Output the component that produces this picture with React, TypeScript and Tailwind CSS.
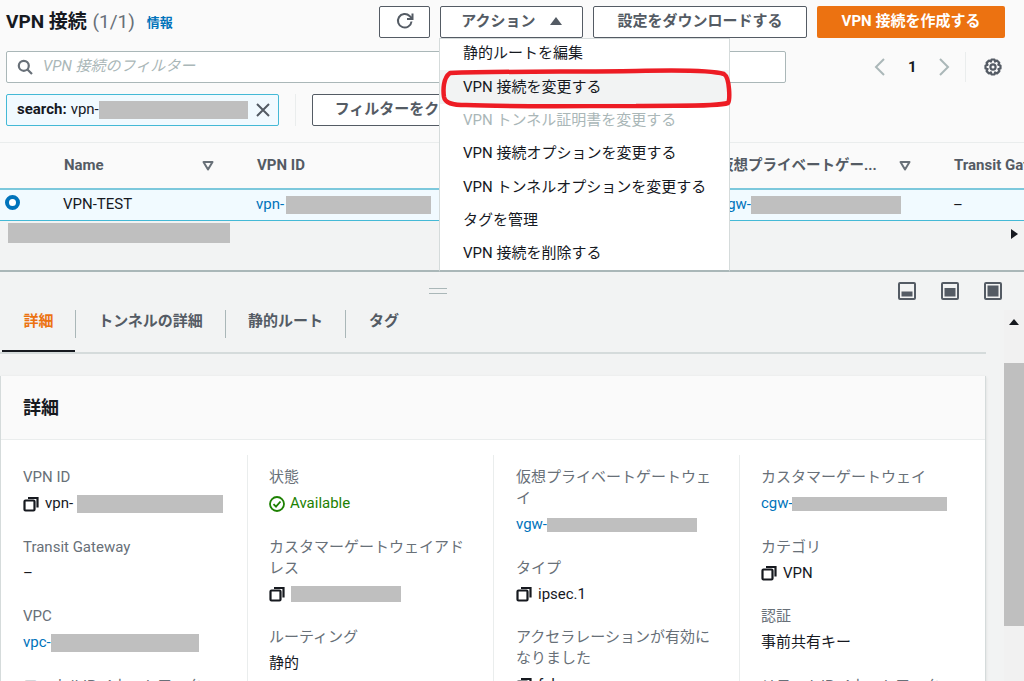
import React from "react";

const font = { fontFamily: 'Roboto, "Noto Sans CJK JP", sans-serif' };

function Bar({ w, h = 18, className = "" }: { w: number; h?: number; className?: string }) {
  return <span className={"inline-block bg-[#bfbfbf] align-middle " + className} style={{ width: w, height: h }} />;
}

function Copy() {
  return (
    <svg width="16" height="16" viewBox="0 0 16 16" fill="none" stroke="#16191f" strokeWidth="2.2" className="shrink-0">
      <rect x="1.5" y="4.5" width="10" height="10" rx="1" />
      <path d="M5 2H14.5V11.5" />
    </svg>
  );
}

function Sort() {
  return (
    <svg width="14" height="12" viewBox="0 0 14 12" fill="none" stroke="#687078" strokeWidth="2">
      <path d="M2.5 2H11.5L7 9.5Z" strokeLinejoin="round" />
    </svg>
  );
}

function Btn({ className, children }: { className: string; children: React.ReactNode }) {
  return (
    <div
      className={
        "h-[32px] flex items-center justify-center rounded-[2px] border border-[#545b64] bg-white text-[#545b64] text-[15px] font-bold pb-[2px] " +
        className
      }
    >
      {children}
    </div>
  );
}

function Field({ label, children, last }: { label: React.ReactNode; children?: React.ReactNode; last?: boolean }) {
  return (
    <div className={last ? "" : "mb-[22px]"}>
      <div className="text-[15px] leading-[21px] text-[#687078]">{label}</div>
      <div className="mt-[4.5px] h-[22px] flex items-center gap-[6px] text-[15px] text-[#16191f]">{children}</div>
    </div>
  );
}

function Link({ children }: { children: React.ReactNode }) {
  return <span className="text-[#0073bb]">{children}</span>;
}

function Tab({ children, active, w }: { children: React.ReactNode; active?: boolean; w: string }) {
  return (
    <div className={"h-[43px] flex flex-col " + w}>
      <div
        className={
          "h-[40px] flex items-start justify-center pt-[1px] text-[15px] leading-[21px] font-bold " +
          (active ? "text-[#ec7211]" : "text-[#545b64]")
        }
      >
        {children}
      </div>
      <div className={active ? "h-[2px] bg-[#16191f]" : "h-[2px]"} />
    </div>
  );
}

function PanelIcon({ kind }: { kind: 0 | 1 | 2 }) {
  return (
    <svg width="18" height="18" viewBox="0 0 18 18">
      <rect x="1" y="1" width="16" height="16" rx="1" fill="none" stroke="#545b64" strokeWidth="2" />
      {kind === 0 && <rect x="3.5" y="9.5" width="11" height="5" fill="#545b64" />}
      {kind === 1 && <rect x="3.5" y="6" width="11" height="8.5" fill="#545b64" />}
      {kind === 2 && <rect x="3.5" y="3.5" width="11" height="11" fill="#545b64" />}
    </svg>
  );
}

const menuItems = [
  "静的ルートを編集",
  "VPN 接続を変更する",
  "VPN トンネル証明書を変更する",
  "VPN 接続オプションを変更する",
  "VPN トンネルオプションを変更する",
  "タグを管理",
  "VPN 接続を削除する",
];

export default function App() {
  return (
    <div className="relative w-[1024px] h-[681px] overflow-hidden bg-[#f2f3f3] text-[#16191f]" style={font}>
      {/* upper panel */}
      <section className="h-[272px] bg-[#fafafa] border-b-2 border-[#aab7b8] flex flex-col">
        <div className="h-[143px] shrink-0 border-b border-[#eaeded] px-[6px] pt-[6px]">
          <div className="flex items-center h-[32px]">
            <div className="text-[19px] font-bold leading-[26px] whitespace-nowrap">
              VPN 接続 <span className="ml-[1px] font-normal text-[#687078]">(1/1)</span>
            </div>
            <span className="ml-[12px] mt-[2px] text-[13px] font-bold text-[#0073bb]">情報</span>
            <div className="ml-auto flex gap-[10px] mr-[13px]">
              <Btn className="w-[51px]">
                <svg width="20" height="20" viewBox="0 0 20 20" fill="none" stroke="#545b64" strokeWidth="2">
                  <path d="M16.5 10.5A6.8 6.8 0 1 1 14.6 5L17 7.3" />
                  <path d="M17.5 2.5V8H12" />
                </svg>
              </Btn>
              <Btn className="w-[143px] gap-[14px]">
                アクション
                <svg width="12" height="10" viewBox="0 0 12 10">
                  <path d="M6 1L12 9H0Z" fill="#545b64" />
                </svg>
              </Btn>
              <Btn className="w-[214px]">設定をダウンロードする</Btn>
              <div className="w-[188px] h-[32px] flex items-center justify-center rounded-[2px] bg-[#ec7211] text-white text-[15px] font-bold pb-[2px]">
                VPN 接続を作成する
              </div>
            </div>
          </div>
          <div className="flex items-center mt-[13px]">
            <div className="w-[780px] h-[32px] flex items-center rounded-[2px] border border-[#aab7b8] bg-white pl-[10px] pb-[2px] gap-[10px]">
              <svg className="mt-[2px]" width="16" height="16" viewBox="0 0 16 16" fill="none" stroke="#687078" strokeWidth="2.2">
                <circle cx="6.8" cy="6.8" r="5" />
                <path d="M10.5 10.5L15 15" />
              </svg>
              <span className="text-[15px] italic text-[#aab7b8]">VPN 接続のフィルター</span>
            </div>
            <svg className="ml-[88px]" width="12" height="20" viewBox="0 0 12 20" fill="none" stroke="#aab7b8" strokeWidth="2">
              <path d="M10 2L2 10L10 18" />
            </svg>
            <span className="ml-[22px] text-[15px] font-bold">1</span>
            <svg className="ml-[21px]" width="12" height="20" viewBox="0 0 12 20" fill="none" stroke="#aab7b8" strokeWidth="2">
              <path d="M2 2L10 10L2 18" />
            </svg>
            <div className="ml-[15px] w-px h-[30px] bg-[#eaeded]" />
            <svg className="ml-[18px]" width="18" height="18" viewBox="0 0 18 18" fill="none" stroke="#545b64" strokeWidth="2.2">
              <circle cx="9" cy="9" r="2.6" />
              <path d="M7.5 1.5H10.5L11 3.6L13 2.6L15.3 4.8L14.3 6.8L16.5 7.5V10.5L14.4 11.1L15.4 13.1L13.1 15.4L11.1 14.4L10.5 16.5H7.5L6.9 14.4L4.9 15.4L2.6 13.1L3.6 11.1L1.5 10.5V7.5L3.6 6.9L2.6 4.9L4.9 2.6L6.9 3.6Z" strokeLinejoin="round" />
            </svg>
          </div>
          <div className="flex items-center mt-[11px]">
            <div className="w-[273px] h-[32px] flex items-center rounded-[2px] border border-[#44b9d6] bg-[#f1faff] pl-[10px] text-[15px]">
              <span className="font-bold text-[#16191f] pb-[1px]">search:</span>
              <span className="ml-[4px] pb-[1px]">vpn-</span>
              <Bar w={149} />
              <svg className="ml-[7px]" width="16" height="16" viewBox="0 0 16 16" stroke="#545b64" strokeWidth="2">
                <path d="M2 2L14 14M14 2L2 14" />
              </svg>
            </div>
            <div className="ml-[16px] w-px h-[32px] bg-[#eaeded]" />
            <Btn className="ml-[16px] w-[180px]">フィルターをクリア</Btn>
          </div>
        </div>

        <div className="h-[45px] shrink-0 flex items-center text-[15px] font-bold text-[#545b64]">
          <div className="w-[42px] shrink-0" />
          <div className="w-px h-[22px] bg-[#dfe3e3]" />
          <div className="w-[191px] shrink-0 pl-[22px] pr-[18px] flex items-center justify-between">
            Name <Sort />
          </div>
          <div className="w-px h-[22px] bg-[#dfe3e3]" />
          <div className="w-[486px] shrink-0 pl-[24px]">VPN ID</div>
          <div className="w-[211px] shrink-0 pr-[18px] flex items-center justify-between whitespace-nowrap text-[14.5px]">
            仮想プライベートゲー... <Sort />
          </div>
          <div className="w-px h-[22px] bg-[#dfe3e3]" />
          <div className="pl-[24px] whitespace-nowrap">Transit Gateway</div>
        </div>

        <div className="h-[33px] shrink-0 flex items-center border-t-2 border-b border-t-[#7cc8dc] border-b-[#44b9d6] bg-[#f1faff] text-[15px]">
          <div className="w-[63px] shrink-0 pl-[5px] mb-[5px]">
            <div className="w-[15px] h-[15px] rounded-full border-[4px] border-[#0073bb] bg-white" />
          </div>
          <div className="w-[193px] shrink-0 text-[#16191f] pb-[2px]">VPN-TEST</div>
          <div className="w-[464px] shrink-0 flex items-center pb-[1px]">
            <Link>vpn-</Link>
            <Bar w={145} className="ml-[2px]" />
          </div>
          <div className="w-[233px] shrink-0 flex items-center pb-[1px]">
            <Link>vgw-</Link>
            <Bar w={150} />
          </div>
          <div>–</div>
        </div>

        <div className="flex-1 flex items-start pt-[2px] pl-[8px] pr-[6px] bg-[#f2f3f3]">
          <div className="w-[222px] h-[20px] bg-[#bfbfbf]" />
          <svg className="ml-auto mt-[6px]" width="7" height="10" viewBox="0 0 7 10">
            <path d="M0 0L7 5L0 10Z" fill="#16191f" />
          </svg>
        </div>
      </section>

      {/* lower panel */}
      <section className="flex flex-col">
        <div className="h-[38px] flex items-center pl-[429px] pr-[22px]">
          <div className="w-[18px] h-[6px] border-y border-[#aab7b8]" />
          <div className="ml-auto flex gap-[25px]">
            <PanelIcon kind={0} />
            <PanelIcon kind={1} />
            <PanelIcon kind={2} />
          </div>
        </div>

        <div className="flex">
          <div className="w-[1004px] pr-[18px] shrink-0">
            <div className="relative h-[44px] flex pl-[2px] border-b-2 border-[#d5dbdb]">
              <Tab active w="w-[73px]">詳細</Tab>
              <div className="w-px h-[28px] bg-[#aab7b8]" />
              <Tab w="w-[149px]">トンネルの詳細</Tab>
              <div className="w-px h-[28px] bg-[#aab7b8]" />
              <Tab w="w-[119px]">静的ルート</Tab>
              <div className="w-px h-[28px] bg-[#aab7b8]" />
              <Tab w="w-[76px]">タグ</Tab>
            </div>

            <div className="mt-[22px] bg-white border-x border-[#d5dbdb] shadow-sm">
              <div className="h-[64px] flex items-center pl-[22px] bg-[#fafafa] border-b border-[#eaeded] text-[18px] font-bold">
                詳細
              </div>
              <div className="grid grid-cols-[247px_246px_246px_1fr] pt-[15px] h-[300px]">
                <div className="pl-[22px] pr-[20px] pt-[12px] border-r border-[#eaeded]">
                  <Field label="VPN ID">
                    <Copy />
                    <span className="flex items-center">
                      vpn-
                      <Bar w={146} className="ml-[4px]" />
                    </span>
                  </Field>
                  <Field label="Transit Gateway">–</Field>
                  <Field label="VPC">
                    <span className="flex items-center">
                      <Link>vpc-</Link>
                      <Bar w={148} />
                    </span>
                  </Field>
                  <Field label="ローカルIPv4ネットワーク" last />
                </div>
                <div className="pl-[21px] pr-[18px] pt-[12px] border-r border-[#eaeded]">
                  <Field label="状態">
                    <svg width="16" height="16" viewBox="0 0 16 16" fill="none" stroke="#1d8102" strokeWidth="1.8" className="shrink-0">
                      <circle cx="8" cy="8" r="7" />
                      <path d="M4.5 8.2L7 10.7L11.5 5.5" />
                    </svg>
                    <span className="text-[#1d8102] -ml-[1px]">Available</span>
                  </Field>
                  <Field label="カスタマーゲートウェイアドレス">
                    <Copy />
                    <Bar w={110} h={16} />
                  </Field>
                  <Field label="ルーティング">静的</Field>
                </div>
                <div className="pl-[22px] pr-[20px] pt-[12px] border-r border-[#eaeded]">
                  <Field label="仮想プライベートゲートウェイ">
                    <span className="flex items-center">
                      <Link>vgw-</Link>
                      <Bar w={150} h={14} />
                    </span>
                  </Field>
                  <Field label="タイプ">
                    <Copy />
                    ipsec.1
                  </Field>
                  <Field label="アクセラレーションが有効になりました">
                    <Copy />
                    false
                  </Field>
                </div>
                <div className="pl-[21px] pr-[20px] pt-[12px]">
                  <Field label="カスタマーゲートウェイ">
                    <span className="flex items-center">
                      <Link>cgw-</Link>
                      <Bar w={155} h={14} className="-ml-[1px]" />
                    </span>
                  </Field>
                  <Field label="カテゴリ">
                    <Copy />
                    VPN
                  </Field>
                  <Field label="認証">事前共有キー</Field>
                  <Field label="リモートIPv4ネットワーク" last />
                </div>
              </div>
            </div>
          </div>
          <div className="w-[20px] h-[400px] bg-[#f1f1f1] flex flex-col items-center">
            <svg className="mt-[9px]" width="10" height="6" viewBox="0 0 10 6">
              <path d="M5 0L10 6H0Z" fill="#16191f" />
            </svg>
            <div className="mt-[38px] w-full h-[263px] bg-[#bfbfbf]" />
          </div>
        </div>
      </section>

      {/* open dropdown menu */}
      <div className="absolute left-[439px] top-[38px] w-[291px] h-[234px] bg-white border border-[#d5dbdb] border-b-2 border-b-[#aab7b8] text-[15px] text-[#16191f]">
        <div className="-mt-[2px]">
          {menuItems.map((t, i) => (
            <div
              key={t}
              className={
                "h-[33.3px] flex items-center pl-[23px] whitespace-nowrap " +
                (i === 1 ? "bg-[#f2f3f3] " : "") +
                (i === 2 ? "text-[#aab7b8]" : "")
              }
            >
              {t}
            </div>
          ))}
        </div>
      </div>

      {/* hand-drawn red annotation */}
      <svg className="absolute left-[436px] top-[64px]" width="300" height="50" viewBox="0 0 300 50" fill="none" stroke="#ed1c24" strokeWidth="4.5" strokeLinecap="round" strokeLinejoin="round">
        <path d="M14 9C70 7 140 8 200 7C240 6 275 6 288 10C294 14 294 36 292 39C280 43 240 41 200 42C140 42 70 43 30 41C16 41 9 39 8 33C7 26 7 14 14 9Z" />
      </svg>
    </div>
  );
}
